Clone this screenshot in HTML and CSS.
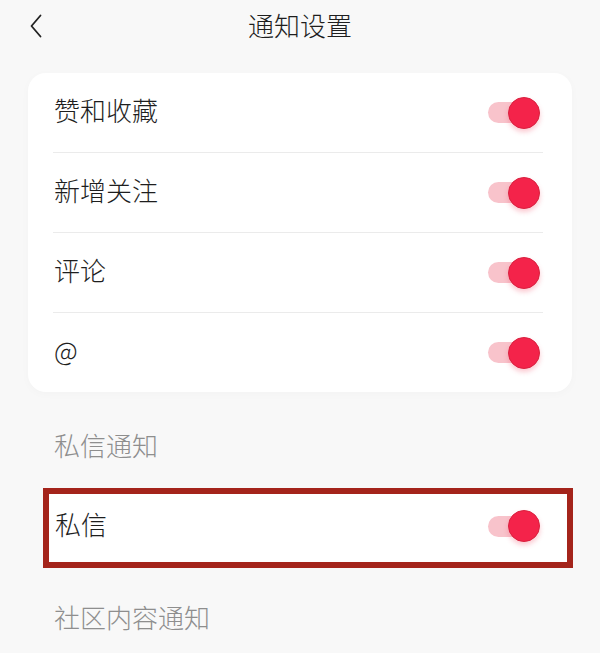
FILE: index.html
```html
<!DOCTYPE html>
<html lang="zh-CN">
<head>
<meta charset="utf-8">
<title>通知设置</title>
<link rel="stylesheet" href="styles.css">
</head>
<body>
<div class="page">
  <header class="header">
    <div class="back">
      <svg width="14" height="24" viewBox="0 0 14 24"><path d="M11.5 1.5 L2.5 12 L11.5 22.5" fill="none" stroke="#222" stroke-width="1.8" stroke-linecap="round" stroke-linejoin="round"/></svg>
    </div>
    <div class="title">通知设置</div>
    <div></div>
  </header>
  <main class="content">
    <section class="card">
      <div class="row"><span class="label">赞和收藏</span><span class="toggle"><span class="knob"></span></span></div>
      <div class="row"><span class="label">新增关注</span><span class="toggle"><span class="knob"></span></span></div>
      <div class="row"><span class="label">评论</span><span class="toggle"><span class="knob"></span></span></div>
      <div class="row"><span class="label">@</span><span class="toggle"><span class="knob"></span></span></div>
    </section>
    <div class="section-title first">私信通知</div>
    <div class="highlight">
      <span class="label">私信</span><span class="toggle"><span class="knob"></span></span>
    </div>
    <div class="section-title second">社区内容通知</div>
  </main>
</div>
</body>
</html>
```
FILE: styles.css
```css
html, body {
  margin: 0;
  padding: 0;
  background: #f8f8f8;
}
body {
  font-family: "Noto Sans CJK SC", "Noto Sans", sans-serif;
  font-weight: 300;
  color: #222;
  width: 600px;
  height: 653px;
  overflow: hidden;
}
.header {
  height: 54px;
  display: grid;
  grid-template-columns: 1fr auto 1fr;
  align-items: center;
}
.back {
  padding-left: 29px;
  display: flex;
  align-items: center;
  height: 54px;
  padding-bottom: 2px;
  box-sizing: border-box;
}
.title {
  font-size: 26px;
  line-height: 26px;
  padding-bottom: 5px;
  color: #1e1e1e;
}
.content {
  padding: 0 28px;
}
.card {
  margin-top: 19px;
  background: #fff;
  border-radius: 18px;
  box-shadow: 0 2px 10px rgba(0, 0, 0, 0.025);
  padding: 0 29px 0 25px;
}
.row {
  height: 79px;
  display: flex;
  align-items: center;
  justify-content: space-between;
  border-bottom: 1px solid #ebebeb;
}
.row:last-child {
  border-bottom: none;
}
.label {
  font-size: 26px;
  line-height: 26px;
  color: #1e1e1e;
  padding-left: 1px;
  padding-bottom: 6px;
}
.toggle {
  position: relative;
  width: 52px;
  height: 32px;
  display: flex;
  align-items: center;
  margin-right: 3px;
}
.toggle::before {
  content: "";
  width: 42px;
  height: 21px;
  border-radius: 11px;
  background: #f8c3cb;
}
.knob {
  position: absolute;
  right: 0;
  top: 0;
  width: 30px;
  height: 30px;
  border-radius: 50%;
  background: #f4234a;
  border: 1px solid #d9213f;
  box-shadow: 0 3px 5px rgba(240, 60, 90, 0.28);
}
.section-title {
  font-size: 26px;
  line-height: 26px;
  color: #8e8e8e;
  padding-left: 26px;
}
.section-title.first {
  margin-top: 40px;
}
.section-title.second {
  margin-top: 36px;
}
.highlight {
  margin: 30px -1px 0 15px;
  height: 64px;
  border: 6px solid #a4241b;
  background: #fff;
  display: flex;
  align-items: center;
  justify-content: space-between;
  padding: 0 27px 4px 5px;
}
.highlight .label {
  padding-bottom: 4px;
}
.highlight .toggle {
  margin-right: 0;
}
```
